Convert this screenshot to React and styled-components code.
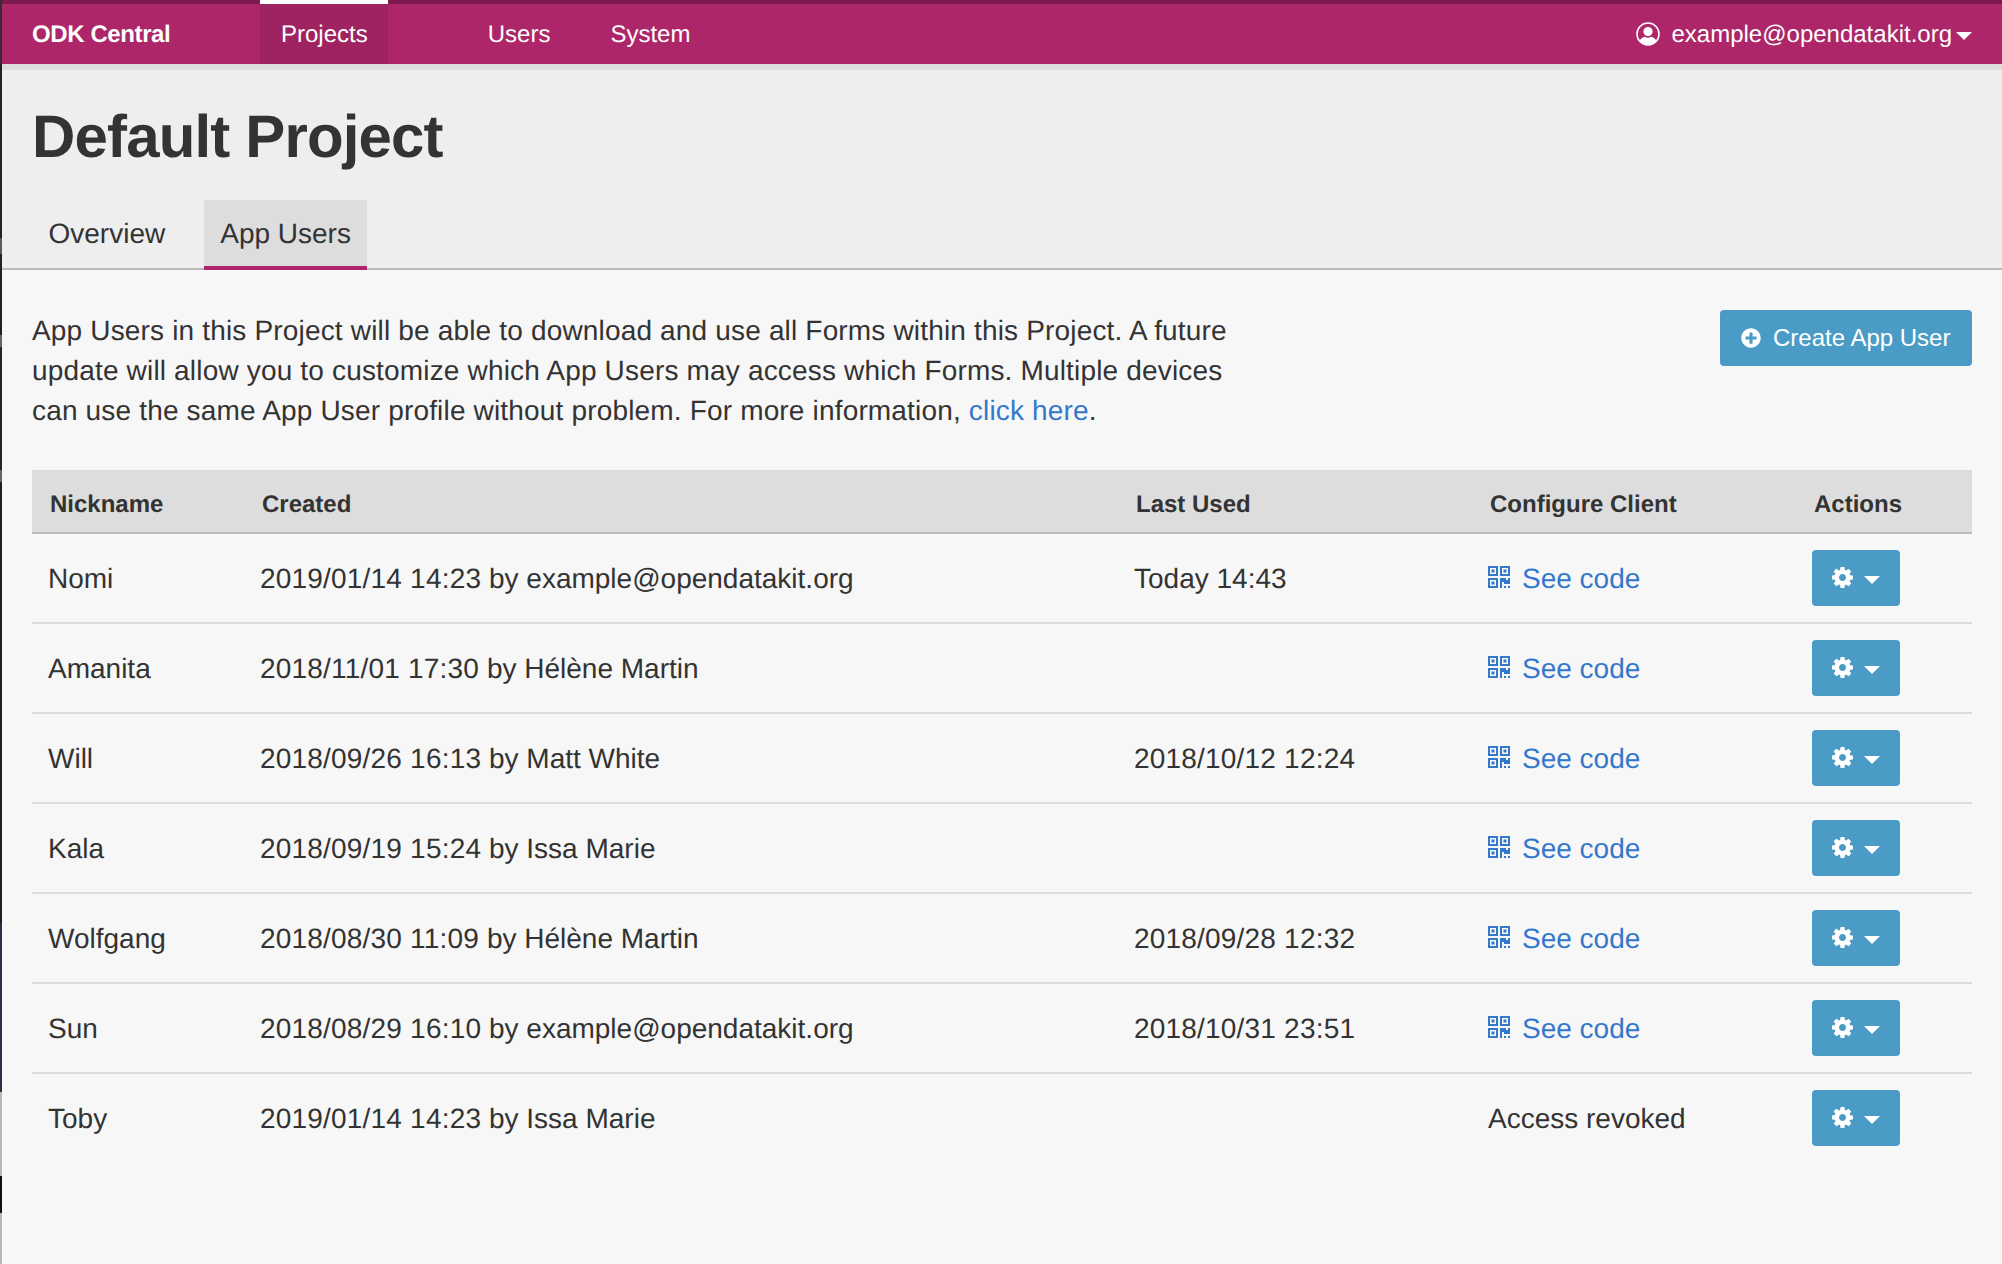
import React from "react";
import styled, { createGlobalStyle } from "styled-components";
import { FaPlusCircle } from "react-icons/fa";

const Global = createGlobalStyle`
  html, body { margin: 0; padding: 0; background: #f7f7f7; }
  body {
    font-family: "Liberation Sans", Arial, sans-serif;
    color: #333;
    font-size: 28px;
    line-height: 40px;
    text-rendering: geometricPrecision;
  }
  * { box-sizing: border-box; }
`;

const Shell = styled.div`display: flex; height: 1264px; overflow: hidden;`;
const Edge = styled.div`
  flex: 0 0 2px;
  background: linear-gradient(180deg,
    #3a2a34 0, #3a2a34 64px, #222 64px, #222 238px, #5a5a5a 238px, #5a5a5a 254px,
    #222 254px, #222 335px, #666 335px, #666 347px, #262626 347px, #262626 470px,
    #666 470px, #666 482px, #1f1f1f 482px, #1f1f1f 923px, #2b3145 923px, #2b3145 1092px,
    #b8b8b8 1092px, #b8b8b8 1176px, #111 1176px, #111 1213px, #b8b8b8 1213px, #b8b8b8 1264px);
`;
const Page = styled.div`flex: 1; min-width: 0; display: flex; flex-direction: column;`;

const Nav = styled.nav`
  flex: 0 0 64px;
  display: flex;
  align-items: stretch;
  background: #ad2669;
  border-top: 4px solid #7c1a4f;
  padding: 0 30px;
  color: #fff;
  font-size: 24px;
`;
const Brand = styled.div`
  width: 228px;
  display: flex;
  align-items: center;
  padding-top: 2px;
  font-weight: 700;
  letter-spacing: -0.4px;
`;
const NavLink = styled.a`
  display: flex;
  align-items: center;
  padding: 2px 20px 0 21px;
  margin-top: -4px;
  height: 64px;
  border-top: 4px solid ${(p) => (p.$active ? "#fff" : "transparent")};
  background: ${(p) => (p.$active ? "#a02361" : "transparent")};
  margin-right: ${(p) => p.$after || 0}px;
`;
const Account = styled.div`
  margin-left: auto;
  display: flex;
  align-items: center;
`;
const AccountIcon = styled.svg`width: 24px; height: 24px; margin-right: 11px;`;
const AccountName = styled.span`padding-top: 2px;`;
const Caret = styled.span`
  display: inline-block;
  width: 0;
  height: 0;
  border-left: 8px solid transparent;
  border-right: 8px solid transparent;
  border-top: 8px solid #fff;
  margin-left: ${(p) => p.$gap}px;
  margin-top: 4px;
`;

const Head = styled.header`
  flex: 0 0 206px;
  border-top: 6px solid #ddd;
  border-bottom: 2px solid #bbb;
  background: #eee;
  padding: 0 30px;
  display: flex;
  flex-direction: column;
`;
const Title = styled.h1`
  margin: 30px 0 0;
  height: 100px;
  font-size: 60px;
  line-height: 74px;
  font-weight: 700;
  letter-spacing: -0.85px;
  color: #333;
`;
const Tabs = styled.div`display: flex; gap: 22px; height: 70px; margin-top: auto; margin-bottom: -2px;`;
const Tab = styled.a`
  display: flex;
  align-items: center;
  padding: 2px 16.5px 0;
  font-size: 28px;
  color: #333;
  background: ${(p) => (p.$active ? "#ddd" : "transparent")};
  border-bottom: 4px solid ${(p) => (p.$active ? "#ad2669" : "transparent")};
`;

const Content = styled.main`flex: 1; padding: 40px 30px 0;`;
const IntroRow = styled.div`
  display: flex;
  justify-content: space-between;
  align-items: flex-start;
  margin-bottom: 39px;
`;
const Intro = styled.p`
  margin: 1px 0 0;
  width: 1220px;
  letter-spacing: 0.17px;
`;
const Link = styled.a`color: #3478cc;`;
const CreateButton = styled.button`
  display: flex;
  align-items: center;
  gap: 12px;
  height: 56px;
  width: 252px;
  padding: 0 20px 0 21px;
  background: #4a9cc6;
  border: 0;
  border-radius: 4px;
  color: #fff;
  font: inherit;
  font-size: 24px;
  svg { width: 20px; height: 20px; flex: none; }
`;

const Table = styled.table`
  width: 100%;
  table-layout: fixed;
  border-collapse: separate;
  border-spacing: 0;
`;
const Th = styled.th`
  height: 64px;
  padding: 7px 0 0 18px;
  background: #ddd;
  border-bottom: 2px solid #bbb;
  text-align: left;
  font-size: 24px;
  font-weight: 700;
  width: ${(p) => p.$w}px;
`;
const Td = styled.td`
  height: 90px;
  padding: 2px 0 0 16px;
  vertical-align: middle;
  white-space: nowrap;
  border-bottom: 2px solid #ddd;
  tr:last-child & { border-bottom-color: transparent; }
`;
const ActionCell = styled(Td)`padding-top: 0;`;
const Stamp = styled.span`letter-spacing: 0.2px;`;
const CodeLink = styled(Link)`display: inline-flex; align-items: center; gap: 12px;`;
const QrIcon = styled.svg`width: 22px; height: 22px; fill: #3478cc; flex: none; margin-top: -4px;`;
const ActionButton = styled.button`
  display: flex;
  align-items: center;
  justify-content: flex-start;
  width: 88px;
  height: 56px;
  padding: 0 0 0 20px;
  background: #4a9cc6;
  border: 0;
  border-radius: 4px;
  color: #fff;
`;
const GearIcon = styled.svg`width: 21px; height: 21px; flex: none; fill: #fff; margin-top: -2px;`;

const Qr = () => (
  <QrIcon viewBox="0 0 22 22" aria-hidden="true">
    <path fillRule="evenodd" d="M0 0h10v10H0zM2 2v6h6V2zM3.5 3.5h3v3h-3zM12 0h10v10H12zM14 2v6h6V2zM15.5 3.5h3v3h-3zM0 12h10v10H0zM2 14v6h6v-6zM3.5 15.5h3v3h-3z" />
    <path d="M12 12h6v2h2v-2h2v6h-6v-2h-2v6h-2zM16 20h2v2h-2zM20 20h2v2h-2z" />
  </QrIcon>
);

const Gear = () => (
  <GearIcon viewBox="128 128 1536 1536" aria-hidden="true">
    <path d="M1152 896q0-106-75-181t-181-75-181 75-75 181 75 181 181 75 181-75 75-181zm512-109v222q0 12-8 23t-20 13l-185 28q-19 54-39 91 35 50 107 138 10 12 10 25t-9 23q-27 37-99 108t-94 71q-12 0-26-9l-138-108q-44 23-91 38-16 136-29 186-7 28-36 28h-222q-14 0-24.5-8.5t-11.5-21.5l-28-184q-49-16-90-37l-141 107q-10 9-25 9-14 0-25-11-126-114-165-168-7-10-7-23 0-12 8-23 15-21 51-66.5t54-70.5q-27-50-41-99l-183-27q-13-2-21-12.5t-8-23.5v-222q0-12 8-23t19-13l186-28q14-46 39-92-40-57-107-138-10-12-10-24 0-10 9-23 26-36 98.5-107.5t94.5-71.5q13 0 26 10l138 107q44-23 91-38 16-136 29-186 7-28 36-28h222q14 0 24.5 8.5t11.5 21.5l28 184q49 16 90 37l142-107q9-9 24-9 13 0 25 10 129 119 165 170 7 8 7 22 0 12-8 23-15 21-51 66.5t-54 70.5q26 50 41 98l183 28q13 2 21 12.5t8 23.5z" />
  </GearIcon>
);

const users = [
  ["Nomi", "2019/01/14 14:23", "by example@opendatakit.org", "Today 14:43", true],
  ["Amanita", "2018/11/01 17:30", "by Hélène Martin", "", true],
  ["Will", "2018/09/26 16:13", "by Matt White", "2018/10/12 12:24", true],
  ["Kala", "2018/09/19 15:24", "by Issa Marie", "", true],
  ["Wolfgang", "2018/08/30 11:09", "by Hélène Martin", "2018/09/28 12:32", true],
  ["Sun", "2018/08/29 16:10", "by example@opendatakit.org", "2018/10/31 23:51", true],
  ["Toby", "2019/01/14 14:23", "by Issa Marie", "", false],
];

export default function App() {
  return (
    <>
      <Global />
      <Shell>
        <Edge />
        <Page>
          <Nav>
            <Brand>ODK Central</Brand>
            <NavLink $active $after={79}>Projects</NavLink>
            <NavLink $after={19}>Users</NavLink>
            <NavLink>System</NavLink>
            <Account>
              <AccountIcon viewBox="0 0 24 24" aria-hidden="true">
                <defs>
                  <clipPath id="acct"><circle cx="12" cy="12" r="10.5" /></clipPath>
                </defs>
                <circle cx="12" cy="12" r="11" fill="none" stroke="#fff" strokeWidth="1.6" />
                <circle cx="12" cy="9.6" r="4.6" fill="#fff" />
                <path d="M2 24c0-5.5 4-8.6 7-9.2 1.8 1.4 4.2 1.4 6 0 3 .6 7 3.7 7 9.2z" fill="#fff" clipPath="url(#acct)" />
              </AccountIcon>
              <AccountName>example@opendatakit.org</AccountName>
              <Caret $gap={4} />
            </Account>
          </Nav>
          <Head>
            <Title>Default Project</Title>
            <Tabs>
              <Tab>Overview</Tab>
              <Tab $active>App Users</Tab>
            </Tabs>
          </Head>
          <Content>
            <IntroRow>
              <Intro>
                App Users in this Project will be able to download and use all Forms within this Project. A future update will allow you to customize which App Users may access which Forms. Multiple devices can use the same App User profile without problem. For more information, <Link>click here</Link>.
              </Intro>
              <CreateButton><FaPlusCircle />Create App User</CreateButton>
            </IntroRow>
            <Table>
              <thead>
                <tr>
                  <Th $w={212}>Nickname</Th>
                  <Th $w={874}>Created</Th>
                  <Th $w={354}>Last Used</Th>
                  <Th $w={324}>Configure Client</Th>
                  <Th $w={176}>Actions</Th>
                </tr>
              </thead>
              <tbody>
                {users.map(([name, date, by, last, active]) => (
                  <tr key={name}>
                    <Td>{name}</Td>
                    <Td><Stamp>{date}</Stamp> {by}</Td>
                    <Td>{last.startsWith("Today") ? last : <Stamp>{last}</Stamp>}</Td>
                    <Td>{active ? <CodeLink><Qr />See code</CodeLink> : "Access revoked"}</Td>
                    <ActionCell><ActionButton><Gear /><Caret $gap={11} /></ActionButton></ActionCell>
                  </tr>
                ))}
              </tbody>
            </Table>
          </Content>
        </Page>
      </Shell>
    </>
  );
}
